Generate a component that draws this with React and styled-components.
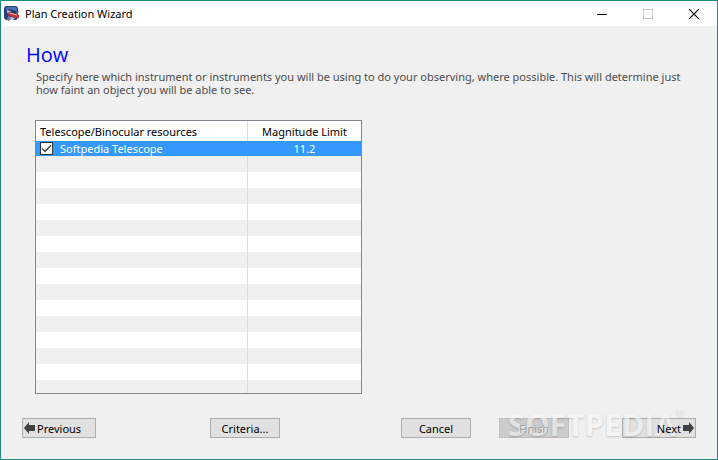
import React, { useState } from "react";
import styled, { createGlobalStyle } from "styled-components";

const GlobalStyle = createGlobalStyle`
  * {
    box-sizing: border-box;
  }
  body {
    margin: 0;
    background: #f0f0f0;
    font-family: "Noto Sans", "Open Sans", sans-serif;
    font-size: 11px;
    line-height: 13px;
    color: #000;
  }
`;

const Window = styled.div`
  position: relative;
  display: flex;
  flex-direction: column;
  min-height: 100vh;
  border: 1px solid #1c8a7c;
  background: #f0f0f0;
`;

const TitleBar = styled.header`
  display: flex;
  align-items: center;
  height: 25px;
  padding-left: 3px;
  background: #fff;
`;

const AppTitle = styled.span`
  flex: 1;
  margin-left: 5px;
`;

const WindowButton = styled.button`
  display: flex;
  align-items: center;
  justify-content: center;
  width: 46px;
  height: 25px;
  padding: 0;
  border: none;
  background: none;
  color: ${({ disabled }) => (disabled ? "#ccc" : "#000")};
`;

const Main = styled.main`
  flex: 1;
  padding: 16px 34px 0;
`;

const Heading = styled.h1`
  margin: 0 0 2px -9px;
  font-family: "Open Sans", sans-serif;
  font-size: 20px;
  font-weight: 400;
  line-height: 26px;
  color: #0000ff;
`;

const Description = styled.p`
  margin: 0 0 24px 1px;
  color: #4c4c4c;
`;

const TableFrame = styled.div`
  width: 327px;
  height: 274px;
  overflow: hidden;
  border: 1px solid #828790;
  background: #fff;
`;

const Table = styled.table`
  width: 100%;
  table-layout: fixed;
  border-collapse: separate;
  border-spacing: 0;
`;

const HeadCell = styled.th`
  width: ${({ $width }) => $width || "auto"};
  height: 20px;
  padding: 0 4px;
  font-weight: 400;
  text-align: ${({ $align }) => $align || "left"};

  & + & {
    border-left: 1px solid #dcdcdc;
  }
`;

const Cell = styled.td`
  height: 16px;
  padding: 0 4px;
  text-align: ${({ $align }) => $align || "left"};

  & + & {
    border-left: 1px solid #dcdcdc;
  }
`;

const Row = styled.tr`
  background: ${({ $selected, $striped }) =>
    $selected ? "#3399ff" : $striped ? "#f0f0f0" : "#fff"};
  color: ${({ $selected }) => ($selected ? "#fff" : "#000")};

  && ${Cell} {
    height: ${({ $selected }) => ($selected ? "15px" : "16px")};
    ${({ $selected }) => $selected && "border-color: #3399ff;"}
  }
`;

const CheckLabel = styled.label`
  display: flex;
  align-items: center;
  gap: 7px;
`;

const CheckBox = styled.span`
  display: grid;
  width: 13px;
  height: 13px;

  input,
  svg {
    grid-area: 1 / 1;
    width: 13px;
    height: 13px;
    margin: 0;
  }
  input {
    appearance: none;
    border: 1px solid #333;
    background: #fff;
  }
  svg {
    pointer-events: none;
  }
`;

const Footer = styled.footer`
  display: grid;
  grid-template-columns: 74px 114fr 70px 121fr 70px 28fr 70px 53fr 74px;
  padding: 0 21px 21px;
`;

const Button = styled.button`
  grid-column: ${({ $column }) => $column};
  display: flex;
  align-items: center;
  justify-content: ${({ $justify }) => $justify || "center"};
  gap: 2px;
  height: 20px;
  padding: 0 1px;
  border: 1px solid #adadad;
  background: #e1e1e1;
  color: #000;
  font: inherit;

  /* labels stay readable above the watermark */
  span,
  svg {
    z-index: 2;
  }

  &:disabled {
    border-color: #bfbfbf;
    background: #ccc;
    color: #a0a0a0;
    text-shadow: 1px 1px 0 #e8e8e8;
  }
`;

const Watermark = styled.div`
  position: absolute;
  z-index: 1;
  right: 41px;
  bottom: 18px;
  opacity: 0.5;
  color: #f8f8f8;
  font-family: "Open Sans", sans-serif;
  font-size: 31px;
  font-weight: 700;
  line-height: 34px;
  text-shadow: 0 1px 2px rgba(0, 0, 0, 0.35);
  pointer-events: none;

  sup {
    position: absolute;
    left: 100%;
    top: 0;
    font-size: 10px;
    line-height: 10px;
  }
`;

const AppIcon = () => (
  <svg width="16" height="16" viewBox="0 0 16 16" aria-hidden="true">
    <rect x="0" y="0" width="14" height="14" rx="3" fill="#263f7c" />
    <rect x="2" y="1" width="11" height="5" rx="2" fill="#4b70b8" />
    <path d="M2 5L5 3L12 5L11 9L4 8Z" fill="#26375f" />
    <path d="M3 4L7 5L6 8L3 7Z" fill="#a9adb8" />
    <path d="M5 6L15 9L15 12L12 12L4 9Z" fill="#cf2f35" />
    <path d="M6 7L13 9" stroke="#f0b6b2" />
    <path d="M12 6L16 5L13 8ZM4 10L8 11L5 15L3 14Z" fill="#77747e" />
    <path d="M7 11L11 12L9 14L6 14Z" fill="#c9cad2" />
  </svg>
);

const Arrow = ({ right }) => (
  <svg width="11" height="12" viewBox="0 0 11 12" aria-hidden="true">
    <path
      d={right ? "M11 6L6 0V3H0V9H6V12Z" : "M0 6L5 0V3H11V9H5V12Z"}
      fill="#404040"
    />
  </svg>
);

const emptyRows = Array.from({ length: 15 }, (_, i) => i);

const App = () => {
  const [checked, setChecked] = useState(true);

  return (
    <>
      <GlobalStyle />
      <Window>
        <TitleBar>
          <AppIcon />
          <AppTitle>Plan Creation Wizard</AppTitle>
          <WindowButton aria-label="Minimize">
            <svg width="10" height="10" shapeRendering="crispEdges">
              <path d="M0 5.5H10" stroke="currentColor" />
            </svg>
          </WindowButton>
          <WindowButton aria-label="Maximize" disabled>
            <svg width="10" height="10">
              <rect x=".5" y=".5" width="9" height="9" fill="none" stroke="currentColor" />
            </svg>
          </WindowButton>
          <WindowButton aria-label="Close">
            <svg width="10" height="10">
              <path d="M0 0L10 10M10 0L0 10" stroke="currentColor" strokeWidth="1.2" />
            </svg>
          </WindowButton>
        </TitleBar>

        <Main>
          <Heading>How</Heading>
          <Description>
            Specify here which instrument or instruments you will be using to do
            your observing, where possible. This will determine just how faint
            an object you will be able to see.
          </Description>
          <TableFrame>
            <Table>
              <thead>
                <tr>
                  <HeadCell>Telescope/Binocular resources</HeadCell>
                  <HeadCell $width="114px" $align="center">
                    Magnitude Limit
                  </HeadCell>
                </tr>
              </thead>
              <tbody>
                <Row $selected>
                  <Cell>
                    <CheckLabel>
                      <CheckBox>
                        <input
                          type="checkbox"
                          checked={checked}
                          onChange={(e) => setChecked(e.target.checked)}
                        />
                        {checked && (
                          <svg viewBox="0 0 13 13" aria-hidden="true">
                            <path d="M2 6.5L5 9.3L11 3.5" fill="none" stroke="#333" strokeWidth="1.2" />
                          </svg>
                        )}
                      </CheckBox>
                      Softpedia Telescope
                    </CheckLabel>
                  </Cell>
                  <Cell $align="center">11.2</Cell>
                </Row>
                {emptyRows.map((i) => (
                  <Row key={i} $striped={i % 2 === 0}>
                    <Cell />
                    <Cell />
                  </Row>
                ))}
              </tbody>
            </Table>
          </TableFrame>
        </Main>

        <Footer>
          <Button $column={1} $justify="flex-start">
            <Arrow />
            <span>Previous</span>
          </Button>
          <Button $column={3}>
            <span>Criteria...</span>
          </Button>
          <Button $column={5}>
            <span>Cancel</span>
          </Button>
          <Button $column={7} disabled>
            <span>Finish</span>
          </Button>
          <Button $column={9} $justify="flex-end">
            <span>Next</span>
            <Arrow right />
          </Button>
        </Footer>
        <Watermark>
          SOFTPEDIA<sup>®</sup>
        </Watermark>
      </Window>
    </>
  );
};

export default App;
